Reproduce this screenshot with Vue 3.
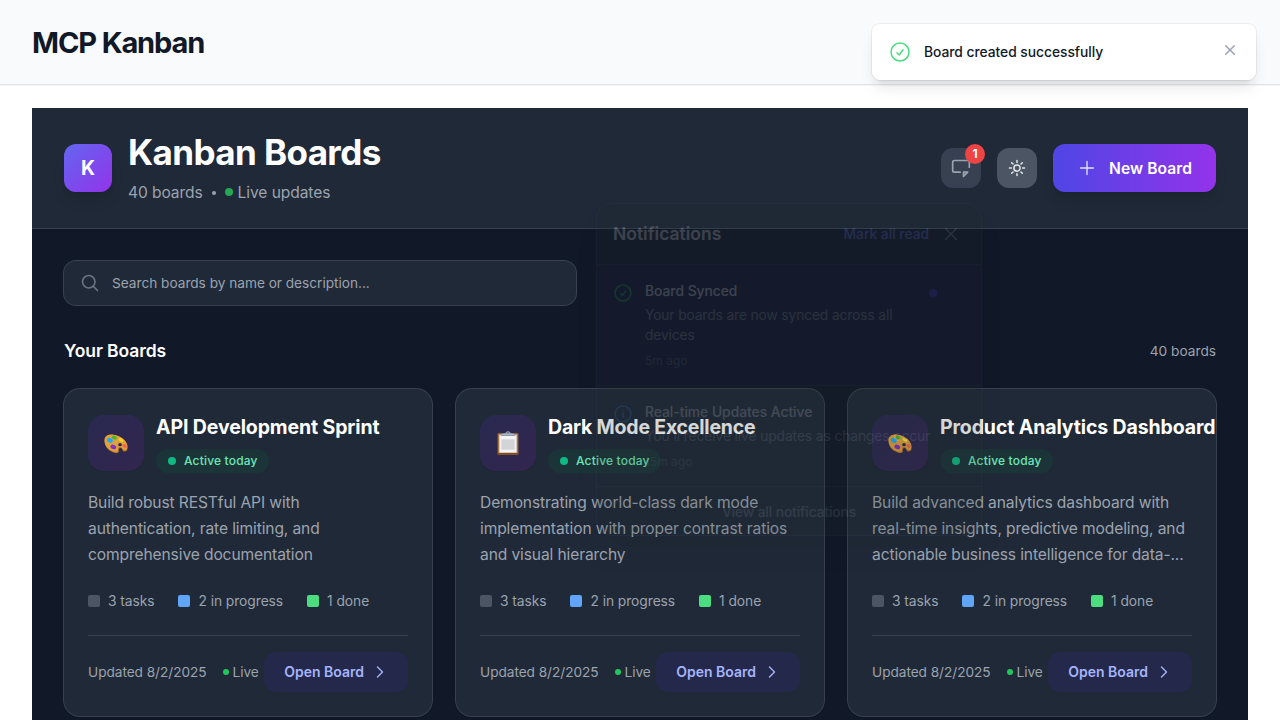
<script setup>
const boards = [
  { name: 'API Development Sprint', icon: 'palette', lines: ['Build robust RESTful API with', 'authentication, rate limiting, and', 'comprehensive documentation'] },
  { name: 'Dark Mode Excellence', icon: 'clipboard', lines: ['Demonstrating world-class dark mode', 'implementation with proper contrast ratios', 'and visual hierarchy'] },
  { name: 'Product Analytics Dashboard', icon: 'palette', lines: ['Build advanced analytics dashboard with', 'real-time insights, predictive modeling, and', 'actionable business intelligence for data-...'] },
]
</script>

<template>
  <div class="page">
    <header class="top"><h1>MCP Kanban</h1></header>

    <div class="shell">
      <div class="hero">
        <div class="brand">
          <div class="logo">K</div>
          <div>
            <h2>Kanban Boards</h2>
            <p class="sub"><span>40 boards</span><i class="sep"></i><i class="live-dot"></i><span>Live updates</span></p>
          </div>
        </div>
        <div class="actions">
          <div class="bell-wrap">
            <button class="square bell">
              <svg width="20" height="20" viewBox="0 0 24 24" fill="none" stroke="currentColor" stroke-width="2" stroke-linecap="round" stroke-linejoin="round"><path d="M15 17h5l-5 5v-5z M11 17H4a2 2 0 01-2-2V5a2 2 0 012-2h16a2 2 0 012 2v6" /></svg>
            </button>
            <span class="count">1</span>

            <div class="panel">
              <div class="panel-head">
                <h3>Notifications</h3>
                <span class="mark">Mark all read</span>
                <svg width="20" height="20" viewBox="0 0 24 24" fill="none" stroke="#9ca3af" stroke-width="1.6" stroke-linecap="round"><path d="M5.5 18.5l13-13M5.5 5.5l13 13" /></svg>
              </div>
              <div class="note unread">
                <svg class="note-icon" width="20" height="20" viewBox="0 0 24 24" fill="none" stroke="#22c55e" stroke-width="1.8" stroke-linecap="round" stroke-linejoin="round"><path d="M9 12.75L11.25 15 15 9.75M21.5 12a9.5 9.5 0 11-19 0 9.5 9.5 0 0119 0z" /></svg>
                <div class="note-text">
                  <b>Board Synced</b>
                  <p>Your boards are now synced across all devices</p>
                  <small>5m ago</small>
                </div>
                <i class="note-dot"></i>
              </div>
              <div class="note read">
                <svg class="note-icon" width="20" height="20" viewBox="0 0 24 24" fill="none" stroke="#3b82f6" stroke-width="1.8" stroke-linecap="round" stroke-linejoin="round"><path d="M11.25 11.25l.04-.02a.75.75 0 011.06.85l-.7 2.84a.75.75 0 001.06.85l.04-.02M21.5 12a9.5 9.5 0 11-19 0 9.5 9.5 0 0119 0zm-9.5-3.75h.01v.01H12v-.01z" /></svg>
                <div class="note-text">
                  <b>Real-time Updates Active</b>
                  <p class="wide">You'll receive live updates as changes occur</p>
                  <small>15m ago</small>
                </div>
              </div>
              <div class="panel-foot">View all notifications</div>
            </div>
          </div>
          <button class="square sun">
            <svg width="20" height="20" viewBox="0 0 24 24" fill="none" stroke="currentColor" stroke-width="1.8" stroke-linecap="round" stroke-linejoin="round"><path d="M12 3v2.25m6.364.386l-1.591 1.591M21 12h-2.25m-.386 6.364l-1.591-1.591M12 18.75V21m-4.773-4.227l-1.591 1.591M5.25 12H3m4.227-4.773L5.636 5.636M15.75 12a3.75 3.75 0 11-7.5 0 3.75 3.75 0 017.5 0z" /></svg>
          </button>
          <button class="new">
            <svg width="20" height="20" viewBox="0 0 24 24" fill="none" stroke="#e0e7ff" stroke-width="1.6" stroke-linecap="round"><path d="M12 4.2v15.6m7.8-7.8H4.2" /></svg>
            <span>New Board</span>
          </button>
        </div>
      </div>

      <main>
        <div class="search">
          <svg width="20" height="20" viewBox="0 0 24 24" fill="none" stroke="#6b7280" stroke-width="2" stroke-linecap="round" stroke-linejoin="round"><path d="M21 21l-5.197-5.197m0 0A7.5 7.5 0 105.196 5.196a7.5 7.5 0 0010.607 10.607z" /></svg>
          <span>Search boards by name or description...</span>
        </div>

        <div class="section"><h3>Your Boards</h3><span>40 boards</span></div>

        <div class="grid">
          <article v-for="b in boards" :key="b.name" class="card">
            <div class="card-head">
              <div class="emoji">
                <svg v-if="b.icon === 'palette'" class="paint" width="24" height="20" viewBox="0 0 72 60">
                  <path d="M2 16C3 6 14 1 29 3c20 3 37 15 41 30 2 9 1 17-5 19-5 2-9-1-10-5-1-5-7-7-10-3-2 3 1 6-1 10-3 6-14 3-23-2C9 46 0 32 2 16z" fill="#b97a26" />
                  <path d="M2 14C4 5 14 0 29 2c20 3 36 15 40 29 2 8 1 15-4 17-5 1-8-2-10-5-3-5-11-6-13-1-1 4 1 6-1 9-3 5-14 2-22-3C8 43 0 30 2 14z" fill="#e0a23c" />
                  <ellipse cx="18" cy="19" rx="9" ry="7" fill="#28a8ea" transform="rotate(25 18 19)" />
                  <ellipse cx="31" cy="11" rx="8" ry="5" fill="#48b52a" transform="rotate(20 31 11)" />
                  <ellipse cx="51" cy="18" rx="8" ry="5" fill="#f4d02c" transform="rotate(38 51 18)" />
                  <ellipse cx="62" cy="36" rx="7" ry="5" fill="#ee665b" transform="rotate(35 62 36)" />
                  <ellipse cx="28" cy="39" rx="9" ry="6.5" fill="#8730c4" transform="rotate(20 28 39)" />
                  <ellipse cx="48" cy="32" rx="5.5" ry="5" fill="#29284a" />
                </svg>
                <svg v-else width="22" height="24" viewBox="0 0 66 72">
                  <rect x="2" y="7" width="62" height="64" rx="2" fill="#a9743a" />
                  <rect x="2" y="66" width="62" height="5" fill="#7b4d20" />
                  <rect x="7" y="11" width="52" height="54" fill="#f3f3f5" />
                  <rect x="13" y="25" width="40" height="31" fill="#d4d4d8" />
                  <path d="M11 15v-5l11-3c4 0 5-6 11-6s7 6 11 6l11 3v5z" fill="#929baa" />
                  <path d="M14 10h38" stroke="#c6ccd6" stroke-width="2" />
                  <circle cx="33" cy="5" r="2" fill="#4b5365" />
                </svg>
              </div>
              <div class="card-title">
                <h4 :class="b.icon">{{ b.name }}</h4>
                <span class="badge"><i></i>Active today</span>
              </div>
            </div>
            <p class="desc"><span v-for="l in b.lines" :key="l">{{ l }}</span></p>
            <div class="stats">
              <span><i class="todo"></i>3 tasks</span>
              <span><i class="doing"></i>2 in progress</span>
              <span><i class="done"></i>1 done</span>
            </div>
            <div class="foot">
              <span>Updated 8/2/2025</span>
              <span class="live"><i></i>Live</span>
              <button class="open">Open Board
                <svg width="16" height="16" viewBox="0 0 24 24" fill="none" stroke="currentColor" stroke-width="2" stroke-linecap="round" stroke-linejoin="round"><path d="M8.25 4.5l7.5 7.5-7.5 7.5" /></svg>
              </button>
            </div>
          </article>
        </div>
      </main>
    </div>

    <div class="toast">
      <svg width="24" height="24" viewBox="0 0 24 24" fill="none" stroke="#4ade80" stroke-width="1.5" stroke-linecap="round" stroke-linejoin="round"><path d="M9 12.75L11.25 15 15 9.75M21 12a9 9 0 11-18 0 9 9 0 0118 0z" /></svg>
      <span>Board created successfully</span>
      <svg class="toast-x" width="20" height="20" viewBox="0 0 20 20" fill="#9ca3af"><path d="M6.28 5.22a.75.75 0 00-1.06 1.06L8.94 10l-3.72 3.72a.75.75 0 101.06 1.06L10 11.06l3.72 3.72a.75.75 0 101.06-1.06L11.06 10l3.72-3.72a.75.75 0 00-1.06-1.06L10 8.94 6.28 5.22z" /></svg>
    </div>
  </div>
</template>

<style>
html, body { overflow: hidden; background: #fff; }
</style>

<style scoped>
* { box-sizing: border-box; margin: 0; }
svg { display: block; flex: none; }
button { border: 0; font: inherit; padding: 0; letter-spacing: 0; }
.page { position: relative; height: 720px; overflow: hidden; font-family: Inter, "Liberation Sans", sans-serif; font-size: 15.6px; line-height: 24px; }
.top { height: 84px; padding: 25px 32px 23px; background: #f9fafb; box-shadow: 0 1px 2px rgba(0,0,0,.08), 0 1px 1px rgba(0,0,0,.06); }
.top h1 { font-size: 29px; line-height: 36px; font-weight: 700; letter-spacing: -1.12px; color: #111827; }
.shell { margin: 24px 32px 0; height: 640px; background: #111827; }
.hero { display: flex; justify-content: space-between; align-items: center; padding: 24px 32px; background: #1f2937; border-bottom: 1px solid #374151; }
.brand, .actions { display: flex; align-items: center; gap: 16px; }
.logo { width: 48px; height: 48px; border-radius: 12px; display: grid; place-items: center; background: linear-gradient(135deg, #6366f1, #9333ea); color: #fff; font-size: 19.5px; font-weight: 700; box-shadow: 0 10px 15px -3px rgba(0,0,0,.1), 0 4px 6px -4px rgba(0,0,0,.1); }
.hero h2 { font-size: 35px; line-height: 40px; font-weight: 700; letter-spacing: -0.6px; color: #fff; }
.sub { height: 24px; margin-top: 8px; display: flex; align-items: center; color: #9ca3af; letter-spacing: -0.1px; }
.sub span { padding-top: 2px; }
.sep { width: 4px; height: 4px; margin: 2px 9px 0 9.5px; border-radius: 50%; background: #9ca3af; }
.live-dot { width: 8px; height: 8px; border-radius: 50%; background: #22ab54; margin-right: 4.5px; }
.square { width: 40px; height: 40px; border-radius: 12px; display: grid; place-items: center; }
.bell { background: #374151; color: #9ca3af; }
.sun { background: #4b5563; color: #e5e7eb; }
.bell-wrap { position: relative; }
.count { position: absolute; top: -4px; right: -4px; width: 20px; height: 20px; border-radius: 50%; background: #ef4444; color: #fff; font-size: 12px; line-height: 20px; font-weight: 700; text-align: center; }
.new { width: 163px; height: 48px; padding: 0 0 0 24px; border-radius: 12px; display: flex; align-items: center; gap: 12px; color: #fff; font-weight: 600; letter-spacing: .08px; white-space: nowrap; background: linear-gradient(90deg, #4f46e5, #9333ea); box-shadow: 0 10px 15px -3px rgba(0,0,0,.1), 0 4px 6px -4px rgba(0,0,0,.1); }
.new span { padding-top: 2px; }

.panel { position: absolute; z-index: 5; top: 55px; right: -1px; width: 386px; opacity: .18; border: 1px solid #374151; border-radius: 16px; background: #222d2f; box-shadow: 0 20px 25px -5px rgba(0,0,0,.15); color: #fff; font-size: 13.8px; line-height: 20px; }
.panel-head { height: 61px; padding: 0 20px 0 16px; display: flex; align-items: center; border-bottom: 1px solid #374151; }
.panel-head h3 { flex: 1; font-size: 17.5px; font-weight: 600; }
.mark { color: #818cf8; font-weight: 500; margin-right: 12px; }
.note { display: flex; padding: 16px; border-bottom: 1px solid #374151; }
.unread { background: #22283d; }
.note-icon { margin: 2px 12px 0 0; }
.note-text { width: 264px; }
.note-text b { display: block; font-weight: 500; }
.note-text p { margin: 4px 0 8px; color: #9ca3af; letter-spacing: -0.13px; }
.note-text .wide { white-space: nowrap; letter-spacing: -0.1px; }
.note-text small { display: block; font-size: 12px; line-height: 16px; color: #6b7280; }
.note-dot { width: 8px; height: 8px; margin: 8px 0 0 20px; border-radius: 50%; background: #4f46e5; }
.read > * { opacity: .85; }
.panel-foot { height: 48px; padding-top: 2px; display: grid; place-items: center; color: #8b93a1; letter-spacing: -0.1px; font-weight: 500; }

main { padding: 32px; }
.search { width: 512px; height: 44px; padding: 0 16px; display: flex; align-items: center; gap: 12px; border-radius: 12px; background: #1f2937; box-shadow: 0 0 0 1px #374151; color: #9ca3af; font-size: 13.7px; letter-spacing: -0.03px; }
.section { margin: 32px 0 24px; display: flex; align-items: center; justify-content: space-between; font-size: 13.7px; color: #9ca3af; }
.section h3 { font-size: 17.5px; line-height: 28px; font-weight: 600; letter-spacing: -0.08px; color: #fff; }
.grid { display: grid; grid-template-columns: repeat(3, 368px); gap: 24px; }
.card { padding: 24px; border-radius: 16px; background: #1f2937; box-shadow: 0 0 0 1px #374151, 0 1px 3px rgba(0,0,0,.1); color: #9ca3af; }
.card-head { display: flex; align-items: center; gap: 12px; height: 60px; }
.emoji { flex: none; width: 56px; height: 56px; border-radius: 16px; display: grid; place-items: center; background: linear-gradient(135deg, #29294f, #32264f); box-shadow: 0 1px 2px rgba(0,0,0,.05); }
.paint { margin-top: 2px; }
.card-title { min-width: 0; white-space: nowrap; }
.card-title h4 { font-size: 19.5px; line-height: 28px; font-weight: 700; letter-spacing: -0.12px; color: #fff; }
.card-title .clipboard { letter-spacing: -0.2px; }
.badge { margin-top: 8px; width: fit-content; height: 24px; padding: 0 11px 0 12px; display: flex; align-items: center; border-radius: 12px; background: #1b3438; color: #6ee7b7; font-size: 12px; font-weight: 500; letter-spacing: .18px; }
.badge i { width: 8px; height: 8px; margin-right: 8px; border-radius: 50%; background: #10b981; }
.desc { margin-top: 17px; line-height: 26px; letter-spacing: -0.12px; }
.desc span { display: block; white-space: nowrap; }
.stats { margin: 23px 0 24px; display: flex; gap: 24px; font-size: 13.8px; line-height: 20px; letter-spacing: -0.06px; }
.stats span { display: flex; align-items: center; gap: 8px; }
.stats i { width: 12px; height: 12px; border-radius: 2px; }
.todo { background: #4b5563; }
.doing { background: #60a5fa; }
.done { background: #4ade80; }
.foot { border-top: 1px solid #374151; padding-top: 16px; display: flex; align-items: center; font-size: 13.7px; line-height: 20px; letter-spacing: -0.06px; white-space: nowrap; }
.live { display: flex; align-items: center; margin-left: 16px; }
.live i { width: 6px; height: 6px; border-radius: 50%; background: #22c55e; margin-right: 4px; }
.open { margin-left: auto; height: 40px; padding: 0 20px; display: flex; align-items: center; gap: 8px; border-radius: 12px; background: #24284b; color: #a5b4fc; font-size: 14px; font-weight: 600; }

.toast { position: absolute; z-index: 10; top: 24px; right: 24px; width: 384px; height: 56px; padding: 16px; display: flex; align-items: center; gap: 12px; border-radius: 8px; background: #fff; color: #111827; font-size: 13.8px; font-weight: 500; letter-spacing: -0.02px; box-shadow: 0 0 0 1px rgba(0,0,0,.05), 0 10px 15px -3px rgba(0,0,0,.1), 0 4px 6px -4px rgba(0,0,0,.1); }
.toast-x { margin-left: auto; align-self: flex-start; }
</style>
